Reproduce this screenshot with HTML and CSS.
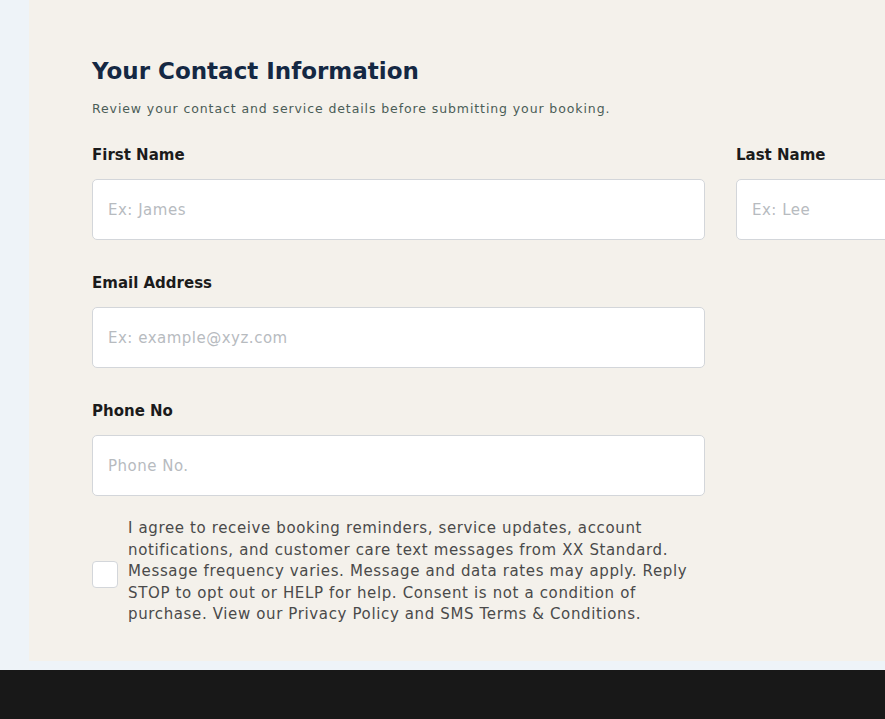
FILE: index.html
```html
<!DOCTYPE html>
<html lang="en">
<head>
    <meta charset="UTF-8">
    <meta name="viewport" content="width=device-width, initial-scale=1.0">
    <title>Your Contact Information</title>
    <link rel="stylesheet" href="styles.css">
</head>
<body>

    <!-- Contact form card -->
    <div class="page">
        <div class="contact-card">
            <h2>Your Contact Information</h2>
            <p class="subtitle">Review your contact and service details before submitting your booking.</p>

            <div class="form-grid">
                <div class="field">
                    <label for="first-name">First Name</label>
                    <input type="text" id="first-name" placeholder="Ex: James">
                </div>
                <div class="field">
                    <label for="last-name">Last Name</label>
                    <input type="text" id="last-name" placeholder="Ex: Lee">
                </div>
                <div class="field">
                    <label for="email">Email Address</label>
                    <input type="email" id="email" placeholder="Ex: example@xyz.com">
                </div>
                <div class="field field-start">
                    <label for="phone">Phone No</label>
                    <input type="tel" id="phone" placeholder="Phone No.">
                </div>
            </div>

            <!-- SMS consent -->
            <label class="consent">
                <input type="checkbox">
                <span class="box"></span>
                <span class="consent-text">I agree to receive booking reminders, service updates, account notifications, and customer care text messages from XX Standard. Message frequency varies. Message and data rates may apply. Reply STOP to opt out or HELP for help. Consent is not a condition of purchase. View our Privacy Policy and SMS Terms &amp; Conditions.</span>
            </label>
        </div>
    </div>

    <footer class="footer"></footer>

</body>
</html>
```

FILE: styles.css
```css
/* Global Styles */
* {
    margin: 0;
    padding: 0;
    box-sizing: border-box;
    font-family: "DejaVu Sans", Verdana, sans-serif;
}

html, body {
    overflow: hidden;
}

body {
    background-color: #eef3f8;
    width: 885px;
}

.page {
    padding: 0 0 9px 29px;
}

/* Card */
.contact-card {
    width: 1400px;
    background-color: #f4f1eb;
    padding: 56px 0 35px 63px;
}

.contact-card h2 {
    font-size: 23px;
    font-weight: 700;
    color: #142843;
    line-height: 30px;
}

.subtitle {
    font-size: 12.5px;
    letter-spacing: 0.9px;
    color: #4b5d57;
    margin-top: 15px;
    line-height: 16px;
}

/* Form */
.form-grid {
    display: grid;
    grid-template-columns: 613px 613px;
    column-gap: 31px;
    row-gap: 33px;
    margin-top: 28px;
}

.field-start {
    grid-column: 1;
}

.field label {
    display: block;
    font-size: 15px;
    font-weight: 700;
    color: #1b1b1b;
    line-height: 20px;
    margin-bottom: 14px;
}

.field input {
    width: 100%;
    height: 61px;
    border: 1px solid #d3d6da;
    border-radius: 5px;
    background: white;
    padding: 0 15px;
    font-size: 15px;
    letter-spacing: 0.5px;
    color: #333;
}

.field input::placeholder {
    color: #b7bbbf;
}

/* Consent */
.consent {
    display: flex;
    align-items: center;
    gap: 10px;
    width: 613px;
    margin-top: 22px;
    cursor: pointer;
}

.consent input {
    display: none;
}

.consent .box {
    flex: 0 0 26px;
    height: 27px;
    margin-top: 6px;
    background: white;
    border: 1px solid #d3d6da;
    border-radius: 4px;
}

.consent-text {
    font-size: 15px;
    letter-spacing: 0.63px;
    line-height: 21.5px;
    color: #4a4a4a;
    width: 565px;
}

/* Footer */
.footer {
    height: 60px;
    background-color: #181818;
}
```
